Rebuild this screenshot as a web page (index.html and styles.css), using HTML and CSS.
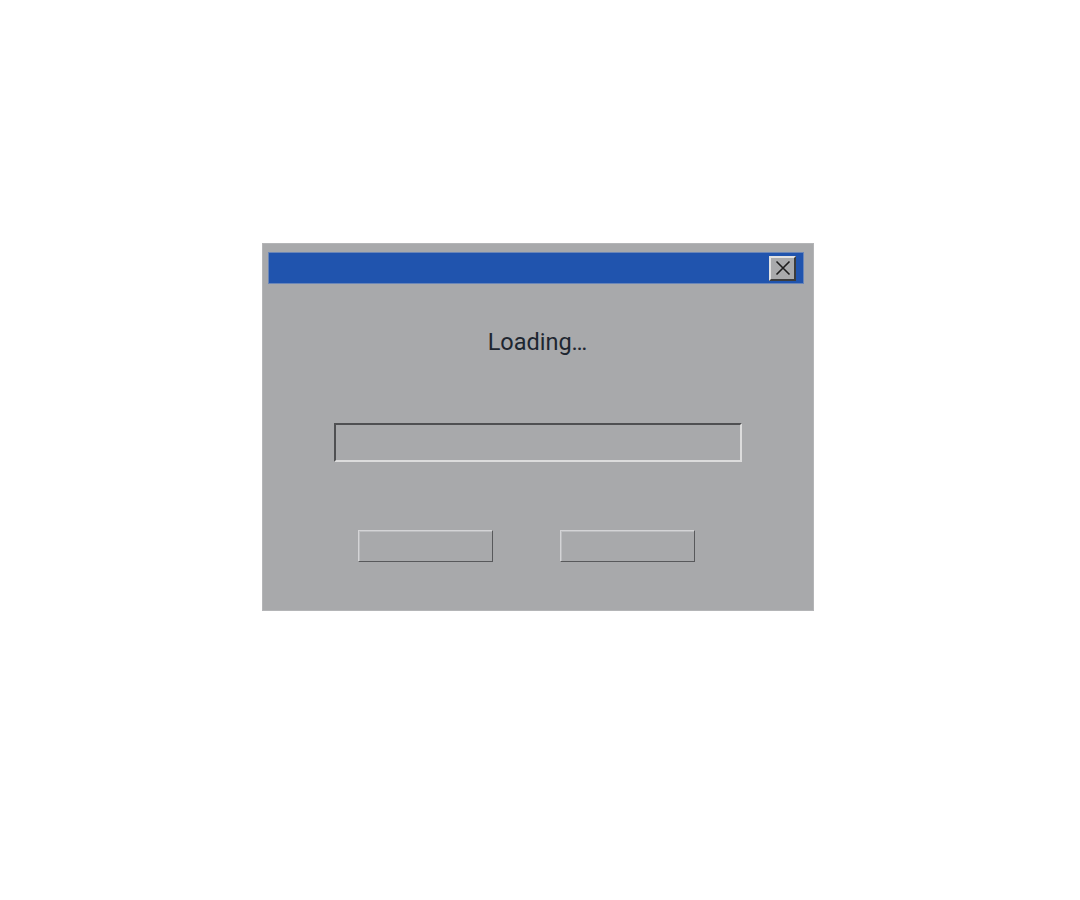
FILE: index.html
```html
<!DOCTYPE html>
<html>
<head>
<meta charset="utf-8">
<link rel="stylesheet" href="styles.css">
</head>
<body>
<div class="dialog">
  <div class="titlebar">
    <button class="close" aria-label="Close">
      <svg width="16" height="16" viewBox="0 0 16 16"><path d="M1.5 1.5 L14.5 14.5 M14.5 1.5 L1.5 14.5" stroke="#1e1e1e" stroke-width="1.6" fill="none"/></svg>
    </button>
  </div>
  <div class="message">Loading…</div>
  <div class="progress"></div>
  <div class="buttons">
    <div class="btn"></div>
    <div class="btn"></div>
  </div>
</div>
</body>
</html>
```
FILE: styles.css
```css
html, body { margin: 0; padding: 0; background: #fff; }
body { font-family: Roboto, "Noto Sans", sans-serif; }
.dialog {
  box-sizing: border-box;
  margin: 243px 0 0 262px;
  width: 552px;
  height: 368px;
  background: #a8a9ab;
  border: 1px solid #b4b5b7;
  padding: 8px 9px 0 5px;
  display: flex;
  flex-direction: column;
}
.titlebar {
  box-sizing: border-box;
  height: 32px;
  background: #2054ae;
  border: 1px solid #6a86b8;
  display: flex;
  justify-content: flex-end;
  align-items: center;
  padding-right: 7px;
}
.close {
  box-sizing: border-box;
  width: 27px;
  height: 25px;
  padding: 0;
  margin: 0;
  background: #a9aaac;
  border: 2px solid;
  border-color: #e2e2e2 #3c3c3c #3c3c3c #e2e2e2;
  display: flex;
  align-items: center;
  justify-content: center;
}
.close svg { display: block; }
.message {
  margin-top: 43px;
  text-align: center;
  font-size: 23.5px;
  line-height: 30px;
  color: #1e2630;
  padding-left: 3px;
}
.progress {
  box-sizing: border-box;
  margin: 66px 0 0 66px;
  width: 408px;
  height: 39px;
  border: 2px solid;
  border-color: #4f5052 #dcdcdc #dcdcdc #4f5052;
}
.buttons {
  display: flex;
  gap: 67px;
  margin: 68px 0 0 90px;
}
.btn {
  box-sizing: border-box;
  width: 135px;
  height: 32px;
  border: 1px solid;
  border-color: #d4d4d6 #58595b #58595b #d4d4d6;
  box-shadow: inset 1px 1px 0 #bcbdbf;
}
```
